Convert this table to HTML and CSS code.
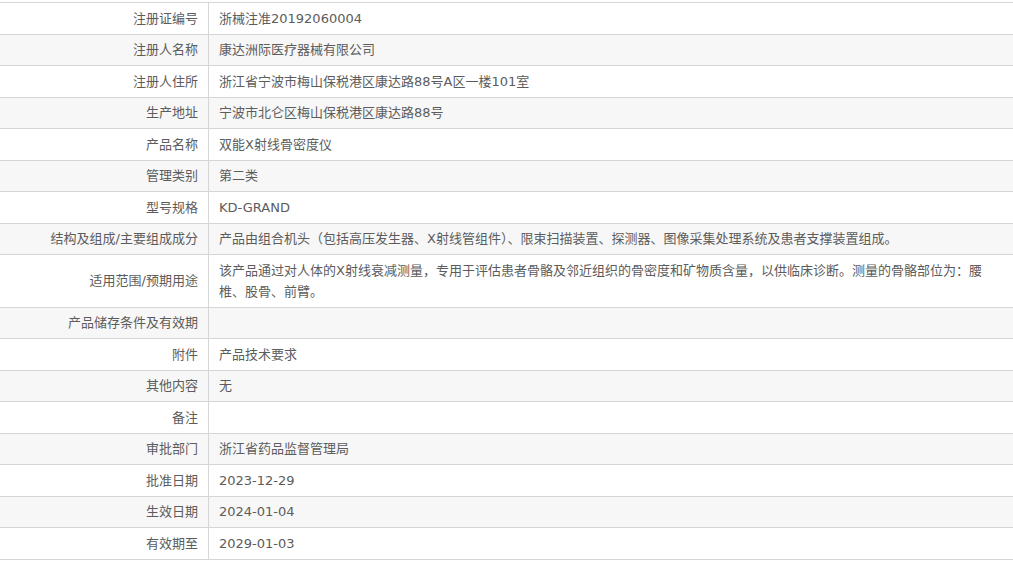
FILE: index.html
```html
<!DOCTYPE html>
<html lang="zh-CN">
<head>
<meta charset="utf-8">
<title>注册证信息</title>
<link rel="stylesheet" href="styles.css">
</head>
<body>
<div class="wrap">
<table class="info">
<tbody>
<tr><th>注册证编号</th><td>浙械注准20192060004</td></tr>
<tr><th>注册人名称</th><td>康达洲际医疗器械有限公司</td></tr>
<tr><th>注册人住所</th><td>浙江省宁波市梅山保税港区康达路88号A区一楼101室</td></tr>
<tr><th>生产地址</th><td>宁波市北仑区梅山保税港区康达路88号</td></tr>
<tr><th>产品名称</th><td>双能X射线骨密度仪</td></tr>
<tr><th>管理类别</th><td>第二类</td></tr>
<tr><th>型号规格</th><td>KD-GRAND</td></tr>
<tr><th>结构及组成/主要组成成分</th><td>产品由组合机头（包括高压发生器、X射线管组件）、限束扫描装置、探测器、图像采集处理系统及患者支撑装置组成。</td></tr>
<tr><th>适用范围/预期用途</th><td>该产品通过对人体的X射线衰减测量，专用于评估患者骨骼及邻近组织的骨密度和矿物质含量，以供临床诊断。测量的骨骼部位为：腰椎、股骨、前臂。</td></tr>
<tr><th>产品储存条件及有效期</th><td></td></tr>
<tr><th>附件</th><td>产品技术要求</td></tr>
<tr><th>其他内容</th><td>无</td></tr>
<tr><th>备注</th><td></td></tr>
<tr><th>审批部门</th><td>浙江省药品监督管理局</td></tr>
<tr><th>批准日期</th><td>2023-12-29</td></tr>
<tr><th>生效日期</th><td>2024-01-04</td></tr>
<tr><th>有效期至</th><td>2029-01-03</td></tr>
</tbody>
</table>
</div>
</body>
</html>
```
FILE: styles.css
```css
html, body {
  margin: 0;
  padding: 0;
  background: #fff;
  overflow: hidden;
}
.wrap {
  padding-top: 2px;
}
.info {
  width: 100%;
  border-collapse: collapse;
  font-family: "DejaVu Sans", "Noto Sans CJK SC", sans-serif;
  font-size: 13px;
  line-height: 21px;
  color: #5c5c5c;
}
.info th,
.info td {
  padding: 4.75px 10px;
  border-top: 1px solid #d6d6d6;
  border-bottom: 1px solid #d6d6d6;
  vertical-align: middle;
}
.info th {
  width: 188px;
  font-weight: normal;
  text-align: right;
  border-right: 1px solid #d6d6d6;
}
.info td {
  text-align: left;
  padding-right: 8px;
}
.info tr:nth-child(even) th,
.info tr:nth-child(even) td {
  background: #f7f7f7;
}
```
